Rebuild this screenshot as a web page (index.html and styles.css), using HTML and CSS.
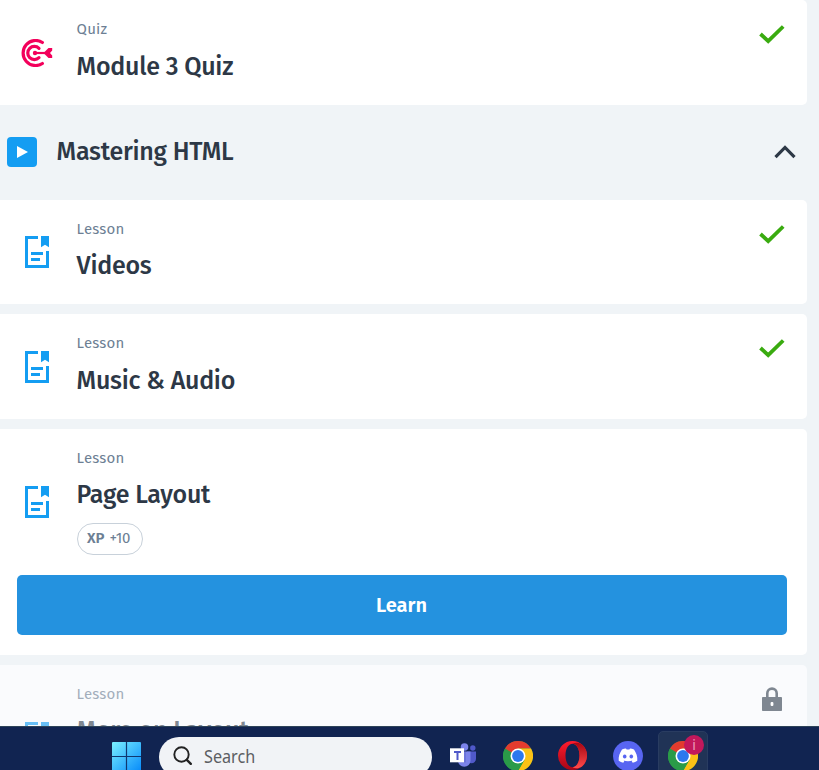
FILE: index.html
```
<!DOCTYPE html>
<html lang="en">
<head>
<meta charset="utf-8">
<title>Mastering HTML</title>
<link rel="stylesheet" href="styles.css">
</head>
<body>
<svg class="defs" aria-hidden="true">
  <symbol id="lesson" viewBox="0 0 24 32">
    <path d="M13 1.5H1.5v29h21V15" fill="none" stroke="currentColor" stroke-width="3"/>
    <path d="M16 0h8v11.2L20 8.7l-4 2.5zM6 16h12v3H6zM6 22h9v3H6z" fill="currentColor"/>
  </symbol>
  <symbol id="check" viewBox="0 0 26 20">
    <path d="M1.5 9l7.700 7.200L24.200 1.500" fill="none" stroke="#3aab10" stroke-width="3.8"/>
  </symbol>
  <symbol id="chrome" viewBox="0 0 30 30">
    <circle cx="15" cy="15" r="15" fill="#2a9b48"/>
    <path d="M15 15L2 7.5A15 15 0 0 1 28 7.5H15z" fill="#e33b2e"/>
    <path d="M15 7.5h13A15 15 0 0 1 15 30l6.500-11.300z" fill="#fbc116"/>
    <path d="M2 7.500l6.500 11.200 6.500 3.800 6.500-3.800L15 30A15 15 0 0 1 2 7.500z" fill="#2a9b48"/>
    <circle cx="15" cy="15" r="7.500" fill="#fff"/><circle cx="15" cy="15" r="5.900" fill="#2c78ee"/>
  </symbol>
</svg>
<main class="course">
  <article class="card first">
    <svg class="quiz-icon" viewBox="0 0 32 28" fill="none" stroke="#f3005b" stroke-width="3.2">
      <path d="M21.400 3.500A12.500 12.500 0 1 0 21.400 24.500" stroke-linecap="round"/>
      <path d="M18 9.300A6.600 6.600 0 1 0 18 18.700" stroke-linecap="round"/>
      <path d="M14 14h13" stroke-width="2.200"/>
      <circle cx="14" cy="14" r="2.200" fill="#f3005b" stroke="none"/>
      <path d="M23.500 13l4-4h3.700v2.500L29 14l2.200 2.500V19h-3.700l-4-4z" fill="#f3005b" stroke="none"/>
    </svg>
    <div class="info"><p class="kind">Quiz</p><h3 class="title">Module 3 Quiz</h3></div>
    <svg class="check"><use href="#check"/></svg>
  </article>
  <header class="module">
    <svg class="play" viewBox="0 0 30 30"><rect width="30" height="30" rx="4" fill="#149df2"/><path d="M10 9l11 6-11 6z" fill="#fff"/></svg>
    <h2 class="title">Mastering HTML</h2>
    <svg class="chevron" viewBox="0 0 22 14"><path d="M1.500 12.200L11 2.500l9.500 9.700" fill="none" stroke="#2d3846" stroke-width="3.2"/></svg>
  </header>
  <article class="card videos">
    <svg class="lesson-icon"><use href="#lesson"/></svg>
    <div class="info"><p class="kind">Lesson</p><h3 class="title">Videos</h3></div>
    <svg class="check"><use href="#check"/></svg>
  </article>
  <article class="card music">
    <svg class="lesson-icon"><use href="#lesson"/></svg>
    <div class="info"><p class="kind">Lesson</p><h3 class="title">Music &amp; Audio</h3></div>
    <svg class="check"><use href="#check"/></svg>
  </article>
  <article class="card current">
    <svg class="lesson-icon"><use href="#lesson"/></svg>
    <div class="info"><p class="kind">Lesson</p><h3 class="title">Page Layout</h3>
      <div class="xp"><b>XP</b><span>+10</span></div></div>
    <button class="learn">Learn</button>
  </article>
  <article class="card locked">
    <svg class="lesson-icon"><use href="#lesson"/></svg>
    <div class="info"><p class="kind">Lesson</p><h3 class="title">More on Layout</h3></div>
    <svg class="lock" viewBox="0 0 20 24"><path d="M5.300 11V6.300a4.700 4.700 0 0 1 9.400 0V11" fill="none" stroke="#7f8791" stroke-width="2.6"/><rect y="10" width="20" height="14" rx=".8" fill="#7f8791"/><rect x="8.600" y="15" width="2.800" height="4" rx="1" fill="#fff"/></svg>
  </article>
</main>
<footer class="taskbar">
  <svg class="windows" viewBox="0 0 29 29"><defs><linearGradient id="win" x1="0" y1="0" x2="1" y2="1"><stop stop-color="#7af0ff"/><stop offset="1" stop-color="#078bfa"/></linearGradient></defs><rect width="29" height="29" rx="1" fill="url(#win)"/><path d="M14.500 0v29M0 14.500h29" stroke="#10386f" stroke-width="1.2"/></svg>
  <div class="search"><svg class="lens" viewBox="0 0 20 20" fill="none" stroke="#222"><circle cx="8.500" cy="8.500" r="7.200" stroke-width="1.9"/><path d="M13.800 13.800l4 4" stroke-width="2.4" stroke-linecap="round"/></svg><span>Search</span></div>
  <svg class="teams" viewBox="0 0 27 24"><circle cx="14.500" cy="4" r="3.800" fill="#7b83eb"/><circle cx="22.800" cy="5" r="2.700" fill="#5059c9"/><path d="M17 8.500h9v7.200a4.500 4.500 0 0 1-9 0z" fill="#5059c9"/><path d="M8 8.500h12.500v9a6 6 0 0 1-12.500 0z" fill="#7b83eb"/><path d="M13 8.500h3v11H9z" fill="#5962c5" opacity=".45"/><rect y="5.300" width="14" height="14" fill="#fff"/><path d="M4 9h7M7.500 9v8" stroke="#5059c9" stroke-width="2"/></svg>
  <svg class="app chrome-a"><use href="#chrome"/></svg>
  <svg class="opera" viewBox="0 0 29 29"><defs><linearGradient id="op" x1="0" y1="0" x2="0" y2="1"><stop stop-color="#ff1b2d"/><stop offset="1" stop-color="#a60616"/></linearGradient><linearGradient id="op2" x1="0" y1="0" x2="0" y2="1"><stop stop-color="#a80612"/><stop offset="1" stop-color="#ff4b4b"/></linearGradient></defs><path d="M14.500 0a14.500 14.500 0 1 0 0 29a14.500 14.500 0 1 0 0-29zM14.500 2.800c4 0 7 5 7 11.700s-3 11.700-7 11.700-7-5-7-11.700 3-11.700 7-11.700z" fill="url(#op)" fill-rule="evenodd"/><path d="M14.500 2.800C17.500 1 21 1.500 24 3.500a14.500 14.500 0 0 1 0 22c-3 2-6.500 2.500-9.500.7 4 0 7-5.200 7-11.700s-3-11.700-7-11.700z" fill="url(#op2)"/></svg>
  <svg class="discord" viewBox="0 0 30 30"><circle cx="15" cy="15" r="15" fill="#5865f2"/><path d="M9 8.500c1.400-.7 2.600-1 4-1.100l.6 1.100h2.800l.6-1.100c1.400.1 2.600.4 4 1.100 2.300 3.500 3.700 7 3.300 11.200-1.400 1-2.900 1.700-4.600 2l-1-1.700.9-.6c-3.100 1-6.100 1-9.200 0l.9.6-1 1.700c-1.700-.3-3.200-1-4.600-2C5.300 15.500 6.700 12 9 8.500z" fill="#fff"/><ellipse cx="11.700" cy="15.500" rx="1.800" ry="2" fill="#5865f2"/><ellipse cx="18.300" cy="15.500" rx="1.800" ry="2" fill="#5865f2"/></svg>
  <div class="active-app"><svg class="app"><use href="#chrome"/></svg><span class="badge">i</span></div>
</footer>
</body>
</html>
```
FILE: styles.css
```
* { box-sizing: border-box; }
html, body { margin: 0; height: 770px; overflow: hidden; }
body {
  display: grid;
  grid-template-rows: 726px 44px;
  background: #f0f4f7;
  color: #2d3846;
  font-family: "Fira Sans", "Noto Sans", sans-serif;
}
svg { display: block; flex: none; }
.defs { position: absolute; width: 0; height: 0; }
h2, h3, p { margin: 0; }
.course { overflow: hidden; width: 807px; }

.card {
  display: grid;
  grid-template-columns: 77px 1fr 48px;
  height: 105px;
  margin-bottom: 10px;
  background: #fff;
  border-radius: 0 5px 5px 0;
}
.card.first { margin-bottom: 0; }
.card.videos { height: 104px; }
.card.current { height: 226px; grid-template-rows: 146px 60px; }
.card.locked { background: #fafbfd; }
.quiz-icon { width: 32px; height: 28px; margin: 39px 0 0 21px; }
.lesson-icon { width: 24px; height: 32px; margin: 36px 0 0 25px; color: #149df2; }
.music .lesson-icon { margin-top: 37px; }
.current .lesson-icon { margin-top: 57px; }
.locked .lesson-icon { margin-top: 57px; opacity: .63; }
.check { width: 26px; height: 20px; margin-top: 25px; }
.info { padding-top: 19px; }
.kind { height: 20px; margin-left: -.4px; color: #6d7f94; font-size: 15px; line-height: 20px; letter-spacing: .2px; }
.title { font-size: 25px; line-height: 32px; font-weight: 500; letter-spacing: -.25px; white-space: nowrap; }
.info .title { margin: 12px 0 0 -.4px; }
.videos .title, .current .title { margin-top: 11px; }
.locked .kind { opacity: .62; }
.locked .title { margin-top: 11px; color: #7f8791; }

.module { display: flex; align-items: center; height: 95px; padding: 0 11.500px 2px 7px; }
.module .title { margin-left: -.4px; }
.play { width: 30px; height: 30px; margin-right: 20px; }
.chevron { width: 22px; height: 14px; margin-left: auto; }

.xp {
  display: flex; align-items: center; gap: 5px;
  width: 66px; height: 32px; margin-top: 12px; padding: 0 9px 2px;
  border: 1px solid #c8d1da; border-radius: 16px;
  color: #6d7f94; font-size: 15px;
}
.xp b { font-weight: 600; }
.xp span { letter-spacing: -.2px; }
.learn {
  grid-column: 1 / -1; height: 60px; margin: 0 20px 0 17px; padding: 0 1px 0 0;
  border: 0; border-radius: 5px; background: #2492df; color: #fff;
  font: 600 20px/60px "Fira Sans", "Noto Sans", sans-serif;
}
.lock { width: 20px; height: 24px; margin: 22px 0 0 3px; }

.taskbar { display: flex; background: #112451; border-top: 1px solid #2d4358; overflow: hidden; }
.windows { width: 29px; height: 29px; margin: 15px 0 0 112px; }
.search { display: flex; width: 273px; height: 40px; margin: 10px 0 0 18px; padding-left: 14px; border-radius: 20px; background: #f1f3f6; color: #5c5e62; font: 18px/38px "Noto Sans", sans-serif; }
.search span { display: inline-block; transform: scaleX(.9); transform-origin: left center; }
.lens { width: 20px; height: 20px; margin: 9px 11px 0 0; }
.teams { width: 27px; height: 24px; margin: 16px 0 0 18px; }
.app { width: 30px; height: 30px; }
.chrome-a { margin: 14px 0 0 26px; }
.opera { width: 29px; height: 29px; margin: 14px 0 0 25px; }
.discord { width: 30px; height: 30px; margin: 14px 0 0 26px; }
.active-app { position: relative; flex: none; width: 50px; height: 48px; margin: 4px 0 0 15px; padding: 9px 0 0 9px; border: 1px solid #293c61; border-radius: 5px; background: #203356; }
.badge { position: absolute; top: 3px; left: 25px; width: 20px; height: 20px; border-radius: 50%; background: #c2185b; color: #ed9aba; font: 14px/20px "Noto Sans", sans-serif; text-align: center; }
```
